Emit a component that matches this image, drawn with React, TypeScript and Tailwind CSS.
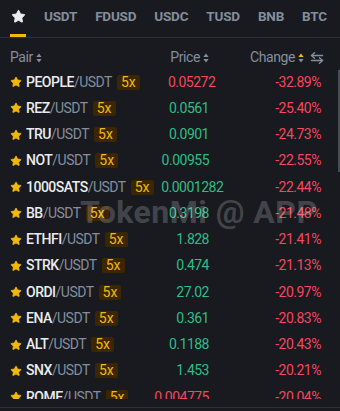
import { Star } from "lucide-react";

type Row = { base: string; price: string; change: string; up: boolean };

const rows: Row[] = [
  { base: "PEOPLE", price: "0.05272", change: "-32.89%", up: false },
  { base: "REZ", price: "0.0561", change: "-25.40%", up: true },
  { base: "TRU", price: "0.0901", change: "-24.73%", up: true },
  { base: "NOT", price: "0.00955", change: "-22.55%", up: true },
  { base: "1000SATS", price: "0.0001282", change: "-22.44%", up: true },
  { base: "BB", price: "0.3198", change: "-21.48%", up: true },
  { base: "ETHFI", price: "1.828", change: "-21.41%", up: true },
  { base: "STRK", price: "0.474", change: "-21.13%", up: true },
  { base: "ORDI", price: "27.02", change: "-20.97%", up: true },
  { base: "ENA", price: "0.361", change: "-20.83%", up: true },
  { base: "ALT", price: "0.1188", change: "-20.43%", up: true },
  { base: "SNX", price: "1.453", change: "-20.21%", up: true },
  { base: "ROME", price: "0.004775", change: "-20.04%", up: false },
];

const tabs = ["USDT", "FDUSD", "USDC", "TUSD", "BNB", "BTC"];

// small up/down sort arrows
const SortIcon = ({ active = false }: { active?: boolean }) => (
  <svg width="6" height="10" viewBox="0 0 6 10" className="ml-[3px]">
    <path d="M3 0.5 L5.6 4 L0.4 4 Z" fill={active ? "#f0b90b" : "#848e9c"} />
    <path d="M3 9.5 L5.6 6 L0.4 6 Z" fill="#848e9c" />
  </svg>
);

const SwapIcon = () => (
  <svg width="14" height="12" viewBox="0 0 14 12" fill="none" stroke="#848e9c" strokeWidth="1.4" strokeLinecap="round" strokeLinejoin="round">
    <path d="M1.5 3.5 H12.5" />
    <path d="M4.5 0.8 L1.5 3.5 L4.5 6.2" />
    <path d="M1.5 8.5 H12.5" />
    <path d="M9.5 5.8 L12.5 8.5 L9.5 11.2" />
  </svg>
);

const App = () => {
  return (
    <div
      className="relative w-[340px] h-[411px] overflow-hidden bg-[#181a20] text-[#eaecef]"
      style={{ fontFamily: "Roboto, 'Liberation Sans', sans-serif" }}
    >
      {/* tabs */}
      <div className="flex h-[38px] items-stretch border-b border-[#2b3139] px-[10px] text-[13.5px] font-bold tracking-[-0.2px] text-[#848e9c]">
        <div className="relative flex w-[16px] items-center justify-center">
          <Star size={15} fill="#eaecef" stroke="#eaecef" strokeWidth={1.5} className="-mt-[4px]" />
          <div className="absolute bottom-0 left-0 h-[3px] w-[16px] bg-[#f0b90b]" />
        </div>
        <div className="ml-[18px] flex gap-[18px]">
          {tabs.map((t) => (
            <div key={t} className="flex items-center pb-[4px]">
              {t}
            </div>
          ))}
        </div>
      </div>

      {/* header */}
      <div className="flex h-[31px] items-center pt-[8px] pl-[10px] pr-[16px] text-[14px] tracking-[-0.4px] text-[#848e9c]">
        <div className="flex flex-1 items-center">
          Pair
          <SortIcon />
        </div>
        <div className="flex w-[80px] items-center justify-end">
          Price
          <SortIcon />
        </div>
        <div className="flex w-[115px] items-center justify-end">
          Change
          <SortIcon active />
          <span className="ml-[6px]">
            <SwapIcon />
          </span>
        </div>
      </div>

      {/* list */}
      <div className="h-[330px] overflow-hidden">
        {rows.map((r) => (
          <div key={r.base} className="flex h-[26.25px] items-center pl-[10px] pr-[19px] text-[14px] tracking-[-0.5px]">
            <div className="flex flex-1 items-center whitespace-nowrap">
              <Star size={12} fill="#f0b90b" stroke="#f0b90b" strokeWidth={1.5} />
              <span className="ml-[4px] font-medium text-[#eaecef]">{r.base}</span>
              <span className="text-[#848e9c]">/USDT</span>
              <span className="ml-[5px] flex h-[15px] items-center rounded-[2px] bg-[#3c2601] px-[4px] text-[14px] tracking-normal text-[#f0b90b]">
                5x
              </span>
            </div>
            <div className={`w-[80px] text-right ${r.up ? "text-[#2ebd85]" : "text-[#f6465d]"}`}>{r.price}</div>
            <div className="w-[112px] text-right text-[#f6465d]">{r.change}</div>
          </div>
        ))}
      </div>

      <div className="mt-[8px] border-t border-[#2b3139]" />

      {/* watermark */}
      <div className="pointer-events-none absolute left-[80px] top-[188px] text-[32px] font-bold tracking-[0.5px] text-white/20">
        TokenMi @ APP
      </div>

      {/* scrollbar */}
      <div className="absolute right-0 top-[70px] h-[102px] w-[2px] bg-[#474d57]" />
    </div>
  );
};

export default App;
